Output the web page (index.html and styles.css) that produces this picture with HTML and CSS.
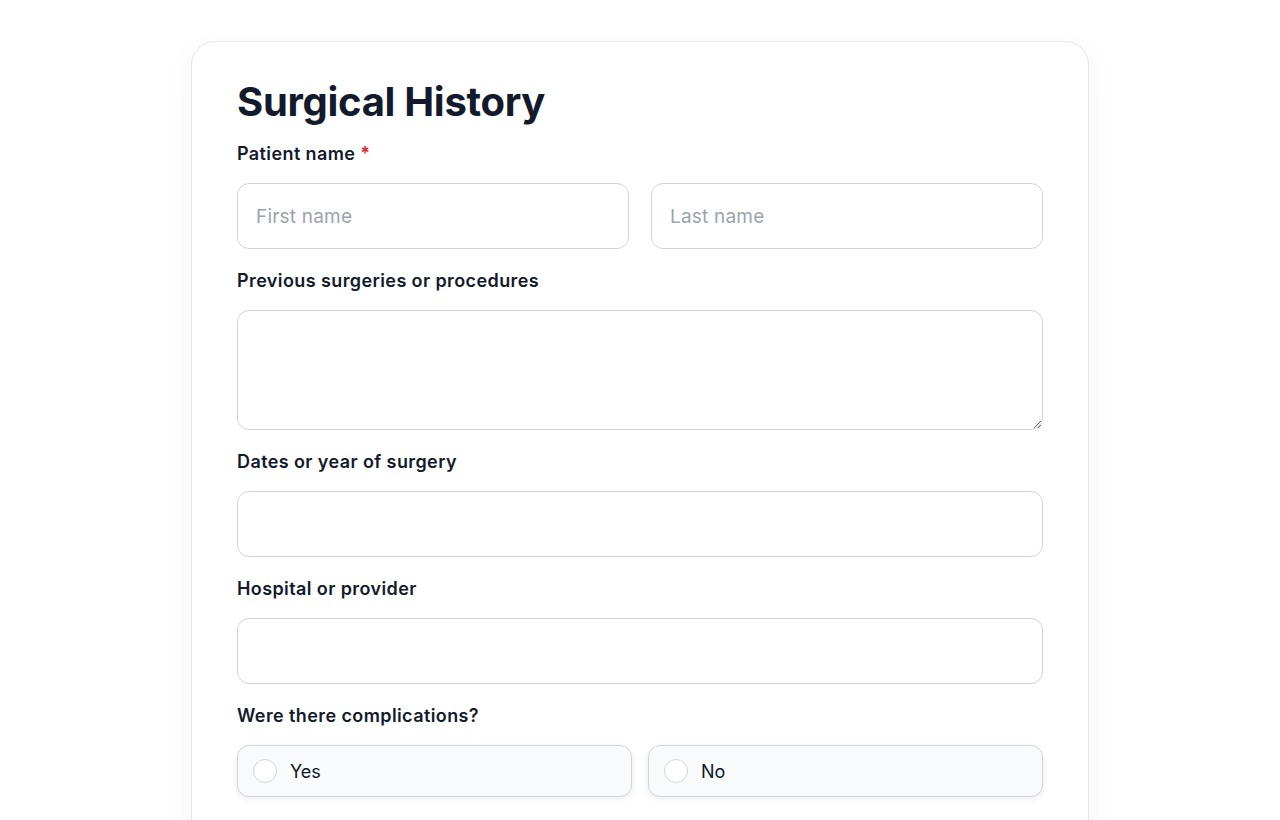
FILE: index.html
```html
<!DOCTYPE html>
<html lang="en">
<head>
  <meta charset="UTF-8">
  <meta name="viewport" content="width=device-width, initial-scale=1.0">
  <title>Surgical History</title>
  <link rel="stylesheet" href="styles.css">
</head>
<body>
  <form class="card">
    <h1 class="title">Surgical History</h1>

    <!-- Patient name -->
    <div class="field">
      <label class="label">Patient name <span class="required">*</span></label>
      <div class="name-row">
        <input type="text" class="input" placeholder="First name">
        <input type="text" class="input" placeholder="Last name">
      </div>
    </div>

    <div class="field">
      <label class="label" for="surgeries">Previous surgeries or procedures</label>
      <textarea id="surgeries" class="input textarea"></textarea>
    </div>

    <div class="field">
      <label class="label" for="dates">Dates or year of surgery</label>
      <input type="text" id="dates" class="input">
    </div>

    <div class="field">
      <label class="label" for="provider">Hospital or provider</label>
      <input type="text" id="provider" class="input">
    </div>

    <div class="field">
      <label class="label">Were there complications?</label>
      <div class="choice-row">
        <label class="choice">
          <input type="radio" name="complications" value="yes">
          <span class="circle"></span>
          <span>Yes</span>
        </label>
        <label class="choice">
          <input type="radio" name="complications" value="no">
          <span class="circle"></span>
          <span>No</span>
        </label>
      </div>
    </div>
  </form>
</body>
</html>
```

FILE: styles.css
```css
/* Page */
body {
  font-family: 'Inter', 'Noto Sans', sans-serif;
  background: rgb(255, 255, 255);
  color: rgb(17, 24, 39);
  margin: 0;
  padding: 41px 0 0;
}

/* Card */
.card {
  width: 806px;
  margin: 0 auto;
  padding: 34px 45px 40px;
  background: white;
  border: 1px solid rgb(229, 231, 235);
  border-radius: 24px;
  box-shadow: 0 10px 30px rgba(0, 0, 0, 0.05);
}

.title {
  font-size: 40px;
  font-weight: 700;
  letter-spacing: -0.3px;
  line-height: 52px;
  margin: 0 0 14px;
  color: rgb(19, 26, 43);
}

.field {
  margin-bottom: 20px;
}

.label {
  display: block;
  font-size: 18px;
  font-weight: 600;
  letter-spacing: 0.4px;
  line-height: 24px;
  margin-bottom: 17px;
  color: rgb(19, 26, 43);
}

.required {
  color: rgb(220, 38, 38);
}

/* Inputs */
.name-row {
  display: grid;
  grid-template-columns: 1fr 1fr;
  gap: 22px;
}

.input {
  box-sizing: border-box;
  display: block;
  width: 100%;
  height: 66px;
  padding: 0 18px;
  font-family: inherit;
  font-size: 19px;
  letter-spacing: 0.2px;
  color: rgb(19, 26, 43);
  background: white;
  border: 1px solid rgb(209, 213, 219);
  border-radius: 12px;
  outline: none;
}

.input::placeholder {
  color: rgb(156, 163, 175);
}

.textarea {
  height: 120px;
  padding: 14px 18px;
  resize: vertical;
}

/* Radio cards */
.choice-row {
  display: grid;
  grid-template-columns: 1fr 1fr;
  gap: 16px;
}

.choice {
  display: flex;
  align-items: center;
  gap: 13px;
  height: 52px;
  box-sizing: border-box;
  padding: 0 15px;
  font-size: 18px;
  background: rgb(248, 250, 252);
  border: 1px solid rgb(209, 213, 219);
  border-radius: 12px;
  box-shadow: 0 2px 6px rgba(0, 0, 0, 0.08);
  cursor: pointer;
}

.choice input {
  display: none;
}

.circle {
  width: 24px;
  height: 24px;
  box-sizing: border-box;
  border: 1px solid rgb(209, 213, 219);
  border-radius: 50%;
  background: white;
}
```
